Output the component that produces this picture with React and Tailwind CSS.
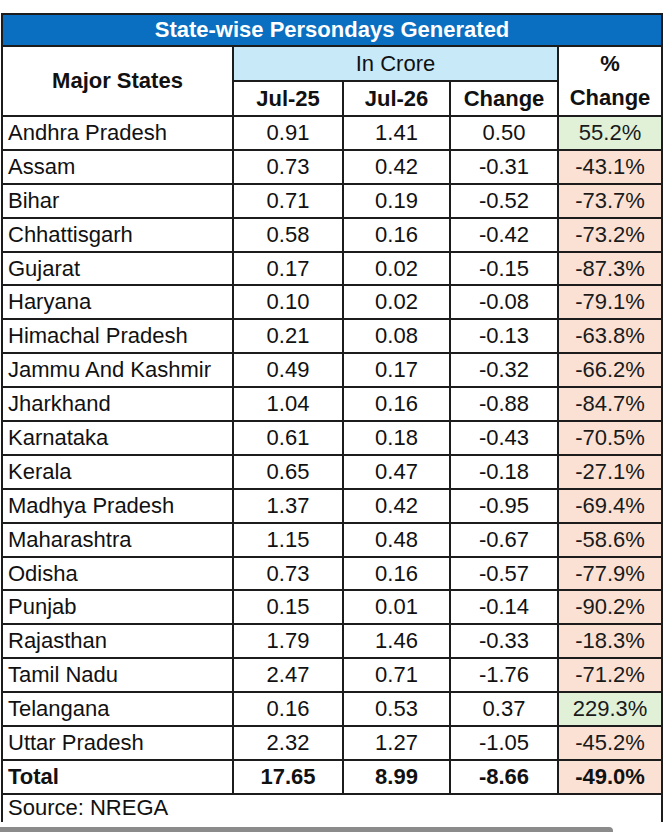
import React from "react";

const rows = [
  ["Andhra Pradesh", "0.91", "1.41", "0.50", "55.2%"],
  ["Assam", "0.73", "0.42", "-0.31", "-43.1%"],
  ["Bihar", "0.71", "0.19", "-0.52", "-73.7%"],
  ["Chhattisgarh", "0.58", "0.16", "-0.42", "-73.2%"],
  ["Gujarat", "0.17", "0.02", "-0.15", "-87.3%"],
  ["Haryana", "0.10", "0.02", "-0.08", "-79.1%"],
  ["Himachal Pradesh", "0.21", "0.08", "-0.13", "-63.8%"],
  ["Jammu And Kashmir", "0.49", "0.17", "-0.32", "-66.2%"],
  ["Jharkhand", "1.04", "0.16", "-0.88", "-84.7%"],
  ["Karnataka", "0.61", "0.18", "-0.43", "-70.5%"],
  ["Kerala", "0.65", "0.47", "-0.18", "-27.1%"],
  ["Madhya Pradesh", "1.37", "0.42", "-0.95", "-69.4%"],
  ["Maharashtra", "1.15", "0.48", "-0.67", "-58.6%"],
  ["Odisha", "0.73", "0.16", "-0.57", "-77.9%"],
  ["Punjab", "0.15", "0.01", "-0.14", "-90.2%"],
  ["Rajasthan", "1.79", "1.46", "-0.33", "-18.3%"],
  ["Tamil Nadu", "2.47", "0.71", "-1.76", "-71.2%"],
  ["Telangana", "0.16", "0.53", "0.37", "229.3%"],
  ["Uttar Pradesh", "2.32", "1.27", "-1.05", "-45.2%"],
];

const bd = "border-2 border-[#1c1c1c]";

export default function App() {
  return (
    <div
      className="w-[664px] h-[832px] bg-white overflow-hidden text-[#111]"
      style={{ fontFamily: '"Liberation Sans", Arial, sans-serif' }}
    >
      <div className="h-[13px]" />
      <table className="ml-[1px] table-fixed border-collapse w-[660px] text-[22px] leading-none">
        <colgroup>
          <col className="w-[231px]" />
          <col className="w-[110px]" />
          <col className="w-[107px]" />
          <col className="w-[108px]" />
          <col className="w-[104px]" />
        </colgroup>
        <tbody>
          <tr className="h-[32px]">
            <td
              colSpan={5}
              className={`${bd} bg-[#0a6fc1] text-white font-bold text-center text-[22px] p-0`}
            >
              State-wise Persondays Generated
            </td>
          </tr>
          <tr className="h-[32.5px]">
            <td rowSpan={2} className={`${bd} font-bold text-center p-0`}>
              Major States
            </td>
            <td colSpan={3} className={`${bd} bg-[#c8e9f8] text-center p-0`}>
              In Crore
            </td>
            <td rowSpan={2} className={`${bd} font-bold text-center p-0 leading-[34px]`}>
              %
              <br />
              Change
            </td>
          </tr>
          <tr className="h-[32.5px]">
            <td className={`${bd} font-bold text-center p-0`}>Jul-25</td>
            <td className={`${bd} font-bold text-center p-0`}>Jul-26</td>
            <td className={`${bd} font-bold text-center p-0`}>Change</td>
          </tr>
          {rows.map((r) => {
            const pos = !r[4].startsWith("-");
            return (
              <tr key={r[0]} className="h-[33.9px]">
                <td className={`${bd} text-left pl-[5px] pr-0 py-0 whitespace-nowrap`}>{r[0]}</td>
                <td className={`${bd} text-center p-0`}>{r[1]}</td>
                <td className={`${bd} text-center p-0`}>{r[2]}</td>
                <td className={`${bd} text-center p-0`}>{r[3]}</td>
                <td
                  className={`${bd} text-center p-0 text-[#1a1a1a] ${
                    pos ? "bg-[#e0f1d8]" : "bg-[#fbe1d4]"
                  }`}
                >
                  {r[4]}
                </td>
              </tr>
            );
          })}
          <tr className="h-[33.9px] font-bold">
            <td className={`${bd} text-left pl-[5px] pr-0 py-0`}>Total</td>
            <td className={`${bd} text-center p-0`}>17.65</td>
            <td className={`${bd} text-center p-0`}>8.99</td>
            <td className={`${bd} text-center p-0`}>-8.66</td>
            <td className={`${bd} text-center p-0 bg-[#fbe1d4]`}>-49.0%</td>
          </tr>
          <tr className="h-[28px]">
            <td
              colSpan={5}
              className="border-x-2 border-[#1c1c1c] border-t-2 border-b-0 text-left pl-[5px] pr-0 py-0 align-top pt-[2px]"
            >
              Source: NREGA
            </td>
          </tr>
        </tbody>
      </table>
      <div className="mt-[5px] h-[8px] w-[613px] rounded-r-[6px] bg-[#8b8b8b]" />
    </div>
  );
}
